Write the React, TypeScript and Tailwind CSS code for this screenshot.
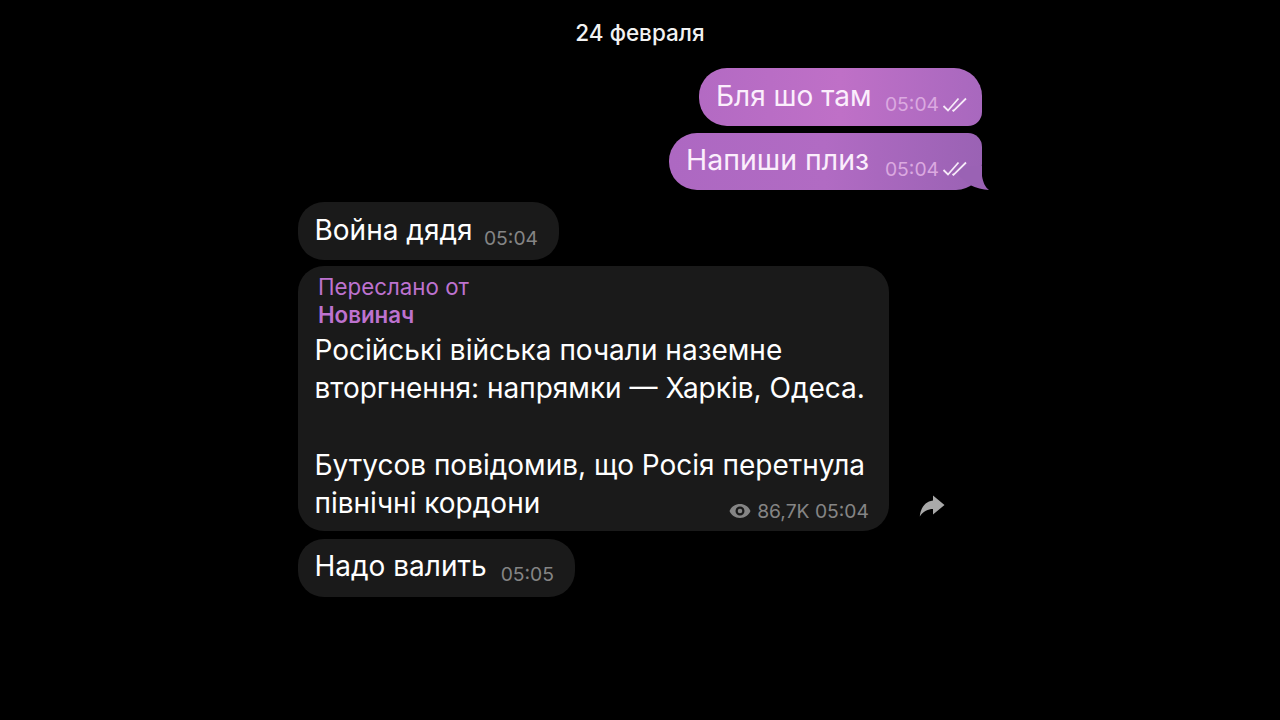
import { ReactNode } from 'react';

const FONT = "font-['Inter','Noto_Sans',sans-serif]";

function Checks() {
  return (
    <svg width="26" height="16" viewBox="0 0 26 16" fill="none" stroke="currentColor" strokeWidth="1.8" className="ml-[3px] text-[#f6ebf8]">
      <path d="M1.500 9 L6 13.500 L16.500 1.500" />
      <path d="M10.500 13 L11.500 13.800 L24 1.500" />
    </svg>
  );
}

function Tail() {
  return (
    <svg width="30" height="24" viewBox="0 0 30 24" className="absolute right-[-7px] bottom-0 text-[#9a62b4]">
      <path d="M23 0 L23 10 C24 16 26 21 30 24 C24 23.500 17 22 11 19 L0 10 L0 0 Z" fill="currentColor" />
    </svg>
  );
}

export default function App() {
  return (
    <div className={`${FONT} w-[1280px] h-[720px] bg-black overflow-hidden flex flex-col items-center`}>
      <div className="mt-[21px] text-[22.500px] leading-[24px] font-medium text-[#f2f2f2]">24 февраля</div>

      <div className="w-[684px] mt-[23px] flex flex-col">
        <div className="w-[283px] h-[58px] self-end flex items-center pl-[17px] pr-[14px] bg-gradient-to-r from-[#b36ac3] via-[#bf70c7] to-[#a868be] rounded-[28px] rounded-br-[14px]">
          <span className="text-[28px] leading-none text-[#fbeefc] -mt-[2px]">Бля шо там</span>
          <Meta />
        </div>

        <div className="relative w-[313px] h-[57px] self-end mt-[7px] flex items-center pl-[17px] pr-[14px] bg-gradient-to-r from-[#ad68c2] via-[#b16bc3] to-[#9a62b4] rounded-[28px] rounded-tr-[14px] rounded-br-[26px]">
          <span className="relative text-[28.500px] leading-none text-[#fbeefc] -mt-[3px]">Напиши плиз</span>
          <Tail />
          <Meta />
        </div>

        <div className="mt-[12px]">
          <Incoming text="Война дядя" time="05:04" width="w-[261px]" />
        </div>

        <div className="mt-[6px] flex items-end">
          <div className="w-[591px] h-[265px] bg-[#1a1a1a] rounded-[26px] pl-[16.500px] relative">
            <div className="pt-[7px] pl-[3.500px] text-[22.300px] leading-[28px] text-[#bd72cf]">
              <div>Переслано от</div>
              <div className="font-semibold">Новинач</div>
            </div>
            <div className="mt-[2px] text-[28px] text-white">
              <Line>Російські війська почали наземне</Line>
              <Line>вторгнення: напрямки — Харків, Одеса.</Line>
              <Line>{' '}</Line>
              <Line>Бутусов повідомив, що Росія перетнула</Line>
              <Line>північні кордони</Line>
            </div>
            <div className="absolute right-[20px] bottom-[10px] flex items-center gap-[6px] text-[19.300px] leading-none text-[#858585]">
              <svg width="22" height="16" viewBox="0 0 22 16" fill="currentColor">
                <path fillRule="evenodd" d="M11 1C6 1 2.200 4 .5 8c1.700 4 5.500 7 10.500 7s8.800-3 10.500-7C19.800 4 16 1 11 1Zm0 11.500a4.500 4.500 0 1 1 0-9 4.500 4.500 0 0 1 0 9Zm0-2.200a2.300 2.300 0 1 0 0-4.600 2.300 2.300 0 0 0 0 4.600Z" />
              </svg>
              <span>86,7K 05:04</span>
            </div>
          </div>
          <svg width="26" height="22" viewBox="0 0 26 22" fill="#a9a9a9" className="ml-[30px] mb-[14px]">
            <path d="M14 .5 25.500 10 14 19.500V14C9 14 4.500 16 .8 21.500 1.500 13 6 6.500 14 5.500Z" />
          </svg>
        </div>

        <div className="mt-[8px]">
          <Incoming text="Надо валить" time="05:05" width="w-[277px]" textClass="-mt-[4px]" timeClass="mt-[14px]" />
        </div>
      </div>
    </div>
  );
}

function Meta() {
  return (
    <span className="relative z-10 ml-auto flex items-center mt-[16px] text-[19.300px] leading-none text-[#dba9e0]">
      05:04
      <Checks />
    </span>
  );
}

function Incoming({ text, time, width, textClass = '-mt-[2px]', timeClass = 'mt-[16px]' }: { text: string; time: string; width: string; textClass?: string; timeClass?: string }) {
  return (
    <div className={`${width} h-[58px] flex items-center justify-between pl-[16.500px] pr-[21px] bg-[#1a1a1a] rounded-[26px]`}>
      <span className={`text-[28px] leading-none text-white ${textClass}`}>{text}</span>
      <span className={`${timeClass} text-[19.300px] leading-none text-[#858585]`}>{time}</span>
    </div>
  );
}

function Line({ children }: { children: ReactNode }) {
  return <p className="h-[38.300px] leading-[38.300px] whitespace-nowrap">{children}</p>;
}
